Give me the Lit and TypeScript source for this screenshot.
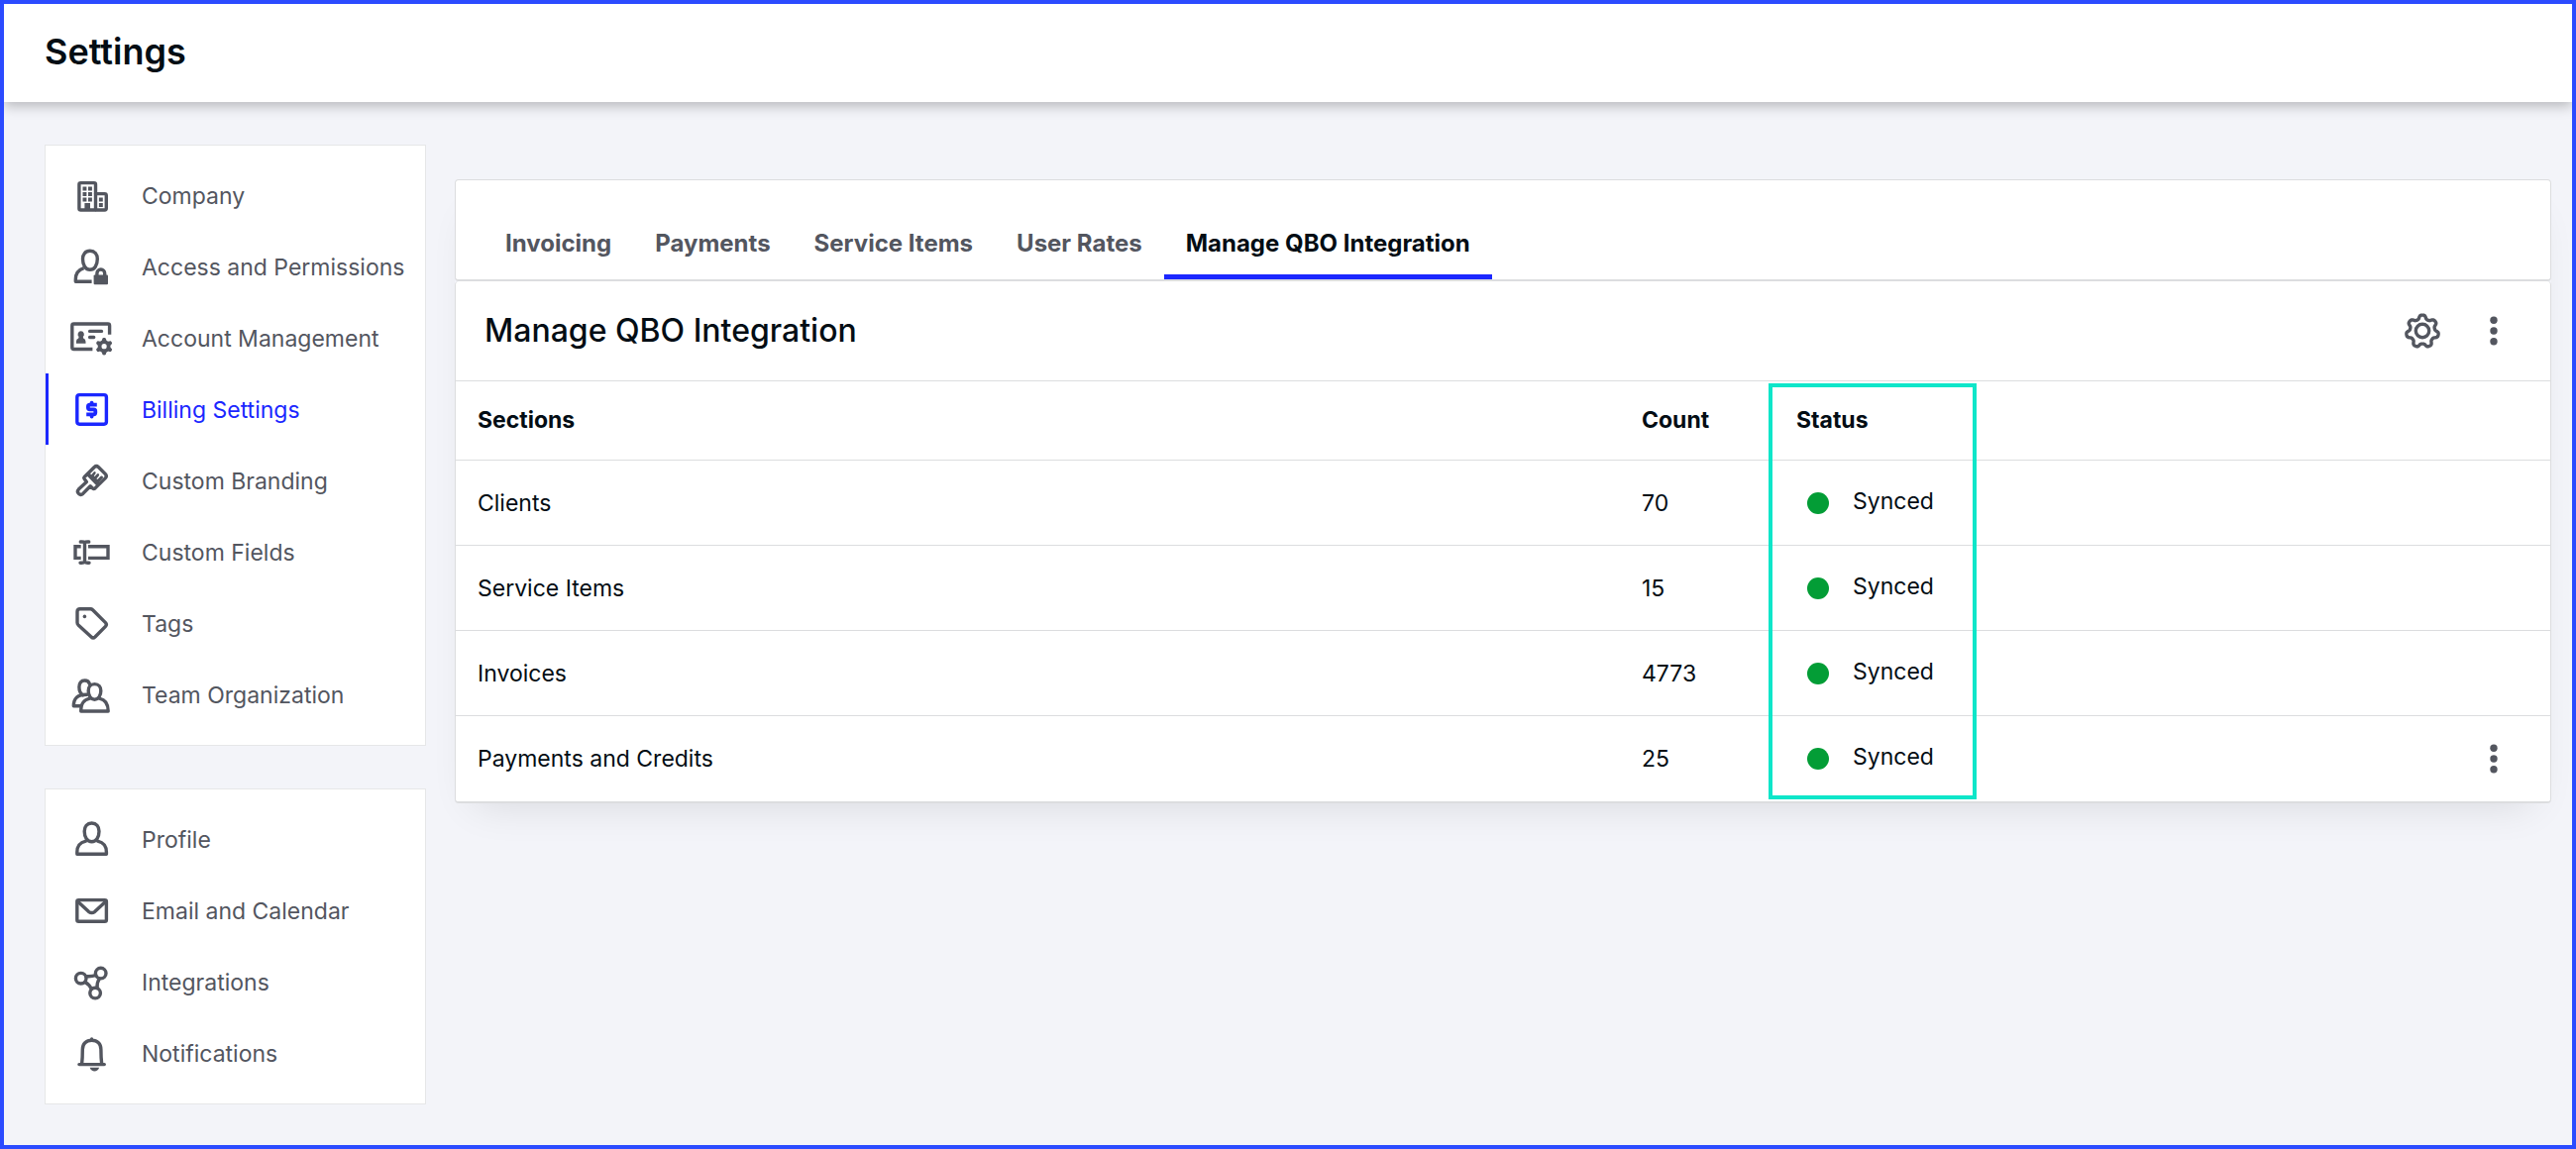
import { LitElement, html, svg, css, nothing, TemplateResult } from "lit";
import { customElement, state } from "lit/decorators.js";
import { classMap } from "lit/directives/class-map.js";

/** Smooth cog outline, first tooth pointing up. */
function cogPath(cx: number, cy: number, inner: number, outer: number, teeth: number): string {
  const steps = teeth * 24;
  const points: string[] = [];
  for (let i = 0; i < steps; i++) {
    const angle = (i / steps) * Math.PI * 2;
    const wave = Math.tanh(1.7 * Math.cos(teeth * angle)) / Math.tanh(1.7);
    const radius = (inner + outer) / 2 + ((outer - inner) / 2) * wave;
    const x = cx + radius * Math.sin(angle);
    const y = cy - radius * Math.cos(angle);
    points.push(`${x.toFixed(2)} ${y.toFixed(2)}`);
  }
  return `M${points.join("L")}Z`;
}

const icons: Record<string, TemplateResult> = {
  company: svg`
    <rect x="9.9" y="9.6" width="16.6" height="27.4" rx="1.6" />
    <path d="M26.5 20.6H35.6Q37.3 20.6 37.3 22.3V35.3Q37.3 37 35.6 37H26.5" />
    <path class="solid" d="M13.5 13.6h3.9v3.9h-3.9zM19 13.6h3.9v3.9h-3.9zM13.5 19.1h3.9v3.9h-3.9zM19 19.1h3.9v3.9h-3.9zM13.5 24.6h3.9v3.9h-3.9zM19 24.6h3.9v3.9h-3.9zM29.9 24.6h3.9v3.9h-3.9zM29.9 30h3.9v3.9h-3.9zM15.4 30h5.6v7h-5.6z" />`,
  access: svg`
    <path d="M20.9 6.3C25.6 6.3 28.3 9.6 28.3 14.6C28.3 20.6 25.4 25.3 20.9 25.3C16.4 25.3 13.5 20.6 13.5 14.6C13.5 9.6 16.2 6.3 20.9 6.3Z" />
    <path d="M14.6 23.6C8.8 25.4 6.3 29.2 6.3 35.2V37.3H22.6" stroke-linecap="butt" />
    <path d="M27.9 31V28.9A3.9 3.9 0 0 1 35.7 28.9V31" />
    <rect class="solid" x="24.6" y="30.4" width="14.4" height="9.8" rx="1" />`,
  account: svg`
    <path d="M40.6 18.8V9.7Q40.6 8 38.9 8H4.5Q2.8 8 2.8 9.7V31.8Q2.8 33.5 4.5 33.5H23.4" stroke-linecap="butt" />
    <path class="solid" d="M11.7 15.3a3.2 3.2 0 0 1 2.1 5.6l.4 1.6q2.3.6 2.3 3.4V27.8H6.9V25.9q0-2.8 2.3-3.4l.4-1.6a3.2 3.2 0 0 1 2.1-5.6z" />
    <path d="M20.6 15.4H32.5M20.6 21.5H24.7" />
    <path class="solid" fill-rule="evenodd" d="${cogPath(35.1, 30.7, 6.3, 8.7, 6)}M35.1 28.1a2.6 2.6 0 1 0 0 5.2a2.6 2.6 0 1 0 0-5.2z" />`,
  billing: svg`
    <rect x="7.8" y="7.6" width="29.6" height="29.6" rx="2.4" />
    <path stroke-width="3.8" stroke-linejoin="miter" stroke-linecap="butt" d="M27.8 17.6H20.7Q18.9 17.6 18.9 19.4V20.6Q18.9 22.4 20.7 22.4H24.6Q26.3 22.4 26.3 24.2V25.6Q26.3 27.4 24.6 27.4H17.2" />
    <path stroke-width="3.8" d="M22.6 15.6V16.2M22.6 29V29.6" />`,
  branding: svg`
    <path d="M15 20.2Q14.4 19.5 15 18.8L25.3 8.5Q27.3 6.7 29.3 8.5L36.4 15.6Q38.2 17.6 36.4 19.6L26 29.9Q24.7 31 23.5 29.9L21.2 27.7L13.7 35.4Q11.6 37.3 9.5 35.4Q7.3 33.2 9.3 31.1L17.4 23.5Z" />
    <path class="solid" d="M17.4 17L20.2 14.4L22.3 16.2L24.6 13.4Q25.8 12.6 26.6 13.7Q27 14.6 26.2 15.6L24.8 17.4L25.6 18L27.9 15.4Q29.2 14.6 30 15.8Q30.4 16.8 29.6 17.7L27.4 20.2L28.4 21L31.6 17.8Q33 17 33.9 18.2Q34.3 19.2 33.5 20L29.9 24L31 25.2L28 28Z" />`,
  fields: svg`
    <path d="M11.7 16.8H6V28.4H11.7M19 16.8H39V28.4H19" stroke-linecap="butt" stroke-linejoin="miter" />
    <path d="M15.5 13V32M11.3 12Q15.5 11.6 15.5 13.6Q15.5 11.6 19.7 12M11 33.2Q15.5 33.6 15.5 31.6Q15.5 33.6 20 33.2" />`,
  tags: svg`
    <path d="M8 10.5Q8 7.7 10.8 7.7H21.2Q22.6 7.7 23.6 8.7L36.5 21.6Q38.2 23.5 36.5 25.3L26 36Q24 37.9 22.1 36L9 23.9Q8 22.9 8 21.5Z" />
    <circle class="solid" cx="15.4" cy="15.4" r="1.8" />`,
  team: svg`
    <path d="M20.4 11.3Q19.2 8 15.6 8C11.8 8 9.9 10.8 9.9 14.4C9.9 18.2 11.3 21.3 13.7 22.7" />
    <path d="M17.8 22.2C8.3 22 4.3 25.8 4.3 33.8H11.5" />
    <path d="M25.5 11.6C29.7 11.6 31.8 14.6 31.8 18.4C31.8 23.3 29.3 27.2 25.5 27.2C21.7 27.2 19.2 23.3 19.2 18.4C19.2 14.6 21.3 11.6 25.5 11.6Z" />
    <path d="M20.7 26.1C14.4 27.3 11.7 31 11.7 39H39.2C39.2 31 36.5 27.3 30.3 26.1" />`,
  profile: svg`
    <path d="M22.6 6C27.3 6 30 9.3 30 14.2C30 20.2 27.1 24.7 22.6 24.7C18.1 24.7 15.2 20.2 15.2 14.2C15.2 9.3 17.9 6 22.6 6Z" />
    <path d="M16.7 24.1C10.3 25.6 7.8 28.8 7.8 35.3V37.2H37.4V35.3C37.4 28.8 34.9 25.6 28.5 24.1" />`,
  email: svg`
    <rect x="7.8" y="11.6" width="29.6" height="21.7" rx="1.6" />
    <path d="M8.6 13.2L19.7 23.6Q22.6 25.6 25.5 23.6L36.6 13.2" />`,
  integrations: svg`
    <circle cx="11.7" cy="18.7" r="5.3" /><circle cx="31.7" cy="13.6" r="5.3" /><circle cx="26.1" cy="33.6" r="5.3" />
    <path d="M16.8 16.6Q21.8 17.2 26.7 15.7M15.8 22.4Q20.6 25 22.3 29.7M30.3 18.9Q27.6 23.2 28.1 28.6" />`,
  notifications: svg`
    <path d="M12.6 33.2Q13.3 27.5 13.3 18.6C13.3 12.7 16.9 9.3 22.6 9.3C28.3 9.3 31.9 12.7 31.9 18.6Q31.9 27.5 32.7 33.2M9.9 33.6H35.3M22.6 8V9" />
    <path class="solid" d="M20.6 36.8H30.2Q28.7 40.6 25.4 40.6Q22.1 40.6 20.6 36.8Z" />`,
  cog: svg`
    <path d="${cogPath(22, 22.5, 12.6, 16.4, 7)}" />
    <circle cx="22" cy="22" r="6.7" />`,
  more: svg`
    <circle class="solid" cx="22" cy="11.2" r="3.7" /><circle class="solid" cx="22" cy="22" r="3.7" /><circle class="solid" cx="22" cy="32.8" r="3.7" />`,
};

function icon(name: string): TemplateResult {
  return html`<svg class="icon" viewBox="0 0 44 44" aria-hidden="true">${icons[name]}</svg>`;
}

interface NavItem {
  icon: string;
  label: string;
}

const navGroups: { name: string; items: NavItem[] }[] = [
  {
    name: "Organization settings",
    items: [
      { icon: "company", label: "Company" },
      { icon: "access", label: "Access and Permissions" },
      { icon: "account", label: "Account Management" },
      { icon: "billing", label: "Billing Settings" },
      { icon: "branding", label: "Custom Branding" },
      { icon: "fields", label: "Custom Fields" },
      { icon: "tags", label: "Tags" },
      { icon: "team", label: "Team Organization" },
    ],
  },
  {
    name: "Personal settings",
    items: [
      { icon: "profile", label: "Profile" },
      { icon: "email", label: "Email and Calendar" },
      { icon: "integrations", label: "Integrations" },
      { icon: "notifications", label: "Notifications" },
    ],
  },
];

const tabs = ["Invoicing", "Payments", "Service Items", "User Rates", "Manage QBO Integration"];

const sections = [
  { name: "Clients", count: 70, status: "Synced", menu: false },
  { name: "Service Items", count: 15, status: "Synced", menu: false },
  { name: "Invoices", count: 4773, status: "Synced", menu: false },
  { name: "Payments and Credits", count: 25, status: "Synced", menu: true },
];

const iconStyles = css`
  .icon {
    width: 44px;
    height: 44px;
    flex: none;
    display: block;
    fill: none;
    stroke: currentColor;
    stroke-width: 3.4;
    stroke-linecap: round;
    stroke-linejoin: round;
  }
  .solid {
    fill: currentColor;
    stroke: none;
  }
`;

@customElement("settings-nav")
class SettingsNav extends LitElement {
  @state() private current = "Billing Settings";

  static styles = [
    iconStyles,
    css`
      :host {
        display: flex;
        flex-direction: column;
        gap: 43px;
      }
      .group {
        padding: 14px 0 15px;
        background: #fff;
        border: 1px solid #e6e7e8;
      }
      .item {
        display: flex;
        align-items: center;
        gap: 29px;
        height: 72px;
        padding-left: 24px;
        color: #53565f;
        font-size: 23px;
        line-height: 32px;
        white-space: nowrap;
        text-decoration: none;
      }
      .item.current {
        padding-left: 21px;
        border-left: 3px solid #1b27ff;
        color: #1b27ff;
      }
      .label {
        padding-top: 2px;
      }
    `,
  ];

  render() {
    return navGroups.map(
      (group) => html`
        <nav class="group" aria-label=${group.name}>
          ${group.items.map(
            (item) => html`
              <a
                href="#"
                class=${classMap({ item: true, current: item.label === this.current })}
                aria-current=${item.label === this.current ? "page" : nothing}
                @click=${(event: Event) => {
                  event.preventDefault();
                  this.current = item.label;
                }}
                >${icon(item.icon)}<span class="label">${item.label}</span></a
              >
            `
          )}
        </nav>
      `
    );
  }
}

@customElement("qbo-panel")
class QboPanel extends LitElement {
  @state() private tab = "Manage QBO Integration";

  static styles = [
    iconStyles,
    css`
      :host {
        display: block;
        border-radius: 4px;
        box-shadow: 0 20px 40px -20px rgba(0, 0, 0, 0.12);
      }
      .tabs {
        display: flex;
        padding: 48px 28px 0;
        background: #fff;
        border: 1px solid #dcdddf;
        border-bottom-width: 2px;
        border-radius: 4px;
      }
      .tab {
        padding: 0 22px 15px;
        border: 0;
        border-bottom: 5px solid transparent;
        background: none;
        color: #53565f;
        font: 700 24px/32px Inter, sans-serif;
        white-space: nowrap;
      }
      .tab.active {
        border-bottom-color: #1b27ff;
        color: #030d14;
      }
      .content {
        background: #fff;
        border: 1px solid #dcdddf;
        border-top: 0;
        border-bottom-width: 2px;
        border-radius: 4px;
      }
      .title-bar {
        display: flex;
        align-items: center;
        gap: 28px;
        height: 100px;
        padding: 0 35px 0 29px;
        border-bottom: 1px solid #dcdddf;
      }
      .title {
        flex: 1;
        margin: 0;
        font-size: 32px;
        font-weight: 500;
        line-height: 40px;
      }
      .icon-button {
        display: block;
        padding: 0;
        border: 0;
        background: none;
        color: #53565f;
      }
      .table-area {
        position: relative;
      }
      table {
        width: 100%;
        border-collapse: separate;
        border-spacing: 0;
        table-layout: fixed;
        font-size: 23px;
        line-height: 32px;
      }
      .col-count {
        width: 156px;
      }
      .col-status {
        width: 204px;
      }
      .col-actions {
        width: 579px;
      }
      th,
      td {
        height: 86px;
        box-sizing: border-box;
        padding: 0 0 0 22px;
        border-bottom: 1px solid #dcdddf;
        text-align: left;
        vertical-align: middle;
        font-weight: 400;
      }
      thead th {
        height: 80px;
        padding-bottom: 2px;
        font-weight: 700;
      }
      tbody tr:last-child th,
      tbody tr:last-child td {
        border-bottom: 0;
      }
      .status {
        display: flex;
        align-items: center;
        gap: 24px;
        padding-left: 11px;
      }
      .dot {
        width: 22px;
        height: 22px;
        border-radius: 50%;
        background: #039d36;
      }
      .status-label {
        padding-bottom: 4px;
      }
      td.actions {
        padding: 0 35px 0 0;
      }
      .actions .icon-button {
        margin-left: auto;
      }
      .highlight {
        position: absolute;
        top: 2px;
        bottom: 2px;
        right: 579px;
        width: 210px;
        box-sizing: border-box;
        border: 4px solid #0ee6c9;
        pointer-events: none;
      }
    `,
  ];

  render() {
    return html`
      <div class="tabs" role="tablist">
        ${tabs.map(
          (name) => html`
            <button
              type="button"
              role="tab"
              class=${classMap({ tab: true, active: name === this.tab })}
              aria-selected=${name === this.tab ? "true" : "false"}
              @click=${() => (this.tab = name)}
            >${name}</button>
          `
        )}
      </div>
      <section class="content">
        <div class="title-bar">
          <h2 class="title">Manage QBO Integration</h2>
          <button type="button" class="icon-button" aria-label="Integration settings">${icon("cog")}</button>
          <button type="button" class="icon-button" aria-label="More options">${icon("more")}</button>
        </div>
        <div class="table-area">
          <table>
            <colgroup>
              <col />
              <col class="col-count" />
              <col class="col-status" />
              <col class="col-actions" />
            </colgroup>
            <thead>
              <tr>
                <th scope="col">Sections</th>
                <th scope="col">Count</th>
                <th scope="col">Status</th>
                <th scope="col" aria-label="Actions"></th>
              </tr>
            </thead>
            <tbody>
              ${sections.map(
                (row) => html`
                  <tr>
                    <th scope="row">${row.name}</th>
                    <td>${row.count}</td>
                    <td>
                      <div class="status"><span class="dot"></span><span class="status-label">${row.status}</span></div>
                    </td>
                    <td class="actions">
                      ${row.menu
                        ? html`<button type="button" class="icon-button" aria-label="More options for ${row.name}">${icon("more")}</button>`
                        : nothing}
                    </td>
                  </tr>
                `
              )}
            </tbody>
          </table>
          <div class="highlight"></div>
        </div>
      </section>
    `;
  }
}

@customElement("app-root")
class AppRoot extends LitElement {
  static styles = css`
    :host {
      display: block;
      box-sizing: border-box;
      min-height: 100vh;
      border: 4px solid #2b4bff;
      background: #f3f4f9;
      color: #030d14;
      font-family: Inter, sans-serif;
    }
    .header {
      display: flex;
      align-items: center;
      height: 95px;
      padding: 0 41px 4px;
      background: #fff;
      box-shadow: 0 4px 12px rgba(0, 0, 0, 0.25);
      clip-path: inset(0 0 -24px 0);
    }
    .heading {
      margin: 0;
      font-size: 36px;
      font-weight: 600;
      line-height: 44px;
    }
    .layout {
      display: grid;
      grid-template-columns: 385px minmax(0, 1fr);
      align-items: start;
      gap: 29px;
      padding: 43px 21px 41px 41px;
    }
    .panel {
      margin-top: 35px;
    }
  `;

  render() {
    return html`
      <header class="header"><h1 class="heading">Settings</h1></header>
      <main class="layout">
        <settings-nav></settings-nav>
        <qbo-panel class="panel"></qbo-panel>
      </main>
    `;
  }
}
